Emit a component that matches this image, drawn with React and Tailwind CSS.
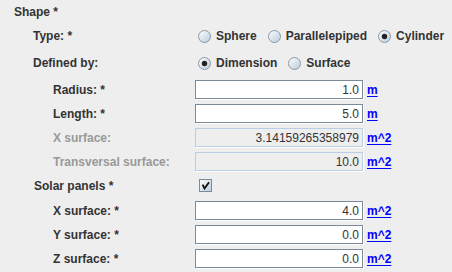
import React from "react";

const font = { fontFamily: '"Liberation Sans", Arial, sans-serif' };

function Radio({ checked, label }) {
  return (
    <div className="flex items-center">
      <svg width="13" height="13" viewBox="0 0 13 13" className="shrink-0">
        <defs>
          <linearGradient id="rg" x1="0" y1="0" x2="1" y2="1">
            <stop offset="0" stopColor="#ffffff" />
            <stop offset="1" stopColor="#b8cbdc" />
          </linearGradient>
        </defs>
        <circle cx="6.5" cy="6.5" r="6" fill="url(#rg)" stroke="#8a97a3" strokeWidth="1" />
        {checked && <circle cx="6.5" cy="6.5" r="2.7" fill="#222" />}
      </svg>
      <span className="ml-[5px] text-[12px] font-bold text-[#333333]">{label}</span>
    </div>
  );
}

function Checkbox() {
  return (
    <svg width="13" height="13" viewBox="0 0 13 13" className="shrink-0">
      <defs>
        <linearGradient id="cg" x1="0" y1="0" x2="1" y2="1">
          <stop offset="0" stopColor="#ffffff" />
          <stop offset="1" stopColor="#b8cbdc" />
        </linearGradient>
      </defs>
      <rect x="0.5" y="0.5" width="12" height="12" fill="url(#cg)" stroke="#7a8a99" />
      <path d="M4 6.5 L5.5 9.5 L9.5 4" fill="none" stroke="#111" strokeWidth="1.8" strokeLinecap="square" />
    </svg>
  );
}

function Field({ value, unit, disabled }) {
  return (
    <div className="flex items-center">
      <div
        className={
          disabled
            ? "w-[168px] h-[19px] border border-[#b8cfe5] bg-[#eeeeee] shadow-[1px_1px_0_#ffffff] flex items-center justify-end pr-[3px] text-[12px] text-[#333333]"
            : "w-[168px] h-[19px] border border-[#7a8a99] bg-white shadow-[1px_1px_0_#ffffff] flex items-center justify-end pr-[3px] text-[12px] text-[#333333]"
        }
      >
        {value}
      </div>
      <span className="ml-[4px] text-[12px] font-bold text-[#0000ff] underline underline-offset-2">{unit}</span>
    </div>
  );
}

function Label({ children, indent, disabled }) {
  return (
    <div
      className={
        "w-[195px] shrink-0 text-[12px] font-bold " +
        (disabled ? "text-[#999999]" : "text-[#333333]")
      }
      style={{ paddingLeft: indent }}
    >
      {children}
    </div>
  );
}

function FieldRow({ label, value, unit, disabled }) {
  return (
    <div className="flex items-center h-[24px] pt-[1px]">
      <Label indent={53} disabled={disabled}>{label}</Label>
      <Field value={value} unit={unit} disabled={disabled} />
    </div>
  );
}

export default function App() {
  return (
    <div className="w-[452px] h-[272px] bg-[#eeeeee] overflow-hidden flex flex-col leading-[24px]" style={font}>
      <div className="flex items-center h-[24px]">
        <Label indent={14}>Shape *</Label>
      </div>
      <div className="flex items-center h-[24px]">
        <Label indent={33}>Type: *</Label>
        <div className="flex items-center gap-[11px] pl-[3px]">
          <Radio label="Sphere" />
          <Radio label="Parallelepiped" />
          <Radio label="Cylinder" checked />
        </div>
      </div>
      <div className="flex items-center h-[24px] mt-[3px]">
        <Label indent={33}>Defined by:</Label>
        <div className="flex items-center gap-[11px] pl-[3px]">
          <Radio label="Dimension" checked />
          <Radio label="Surface" />
        </div>
      </div>
      <div className="mt-[2px] flex flex-col">
        <FieldRow label="Radius: *" value="1.0" unit="m" />
        <FieldRow label="Length: *" value="5.0" unit="m" />
        <FieldRow label="X surface:" value="3.14159265358979" unit="m^2" disabled />
        <FieldRow label="Transversal surface:" value="10.0" unit="m^2" disabled />
      </div>
      <div className="flex items-center h-[25px]">
        <Label indent={34}>Solar panels *</Label>
        <div className="pl-[4px] flex items-center">
          <Checkbox />
        </div>
      </div>
      <div className="flex flex-col">
        <FieldRow label="X surface: *" value="4.0" unit="m^2" />
        <FieldRow label="Y surface: *" value="0.0" unit="m^2" />
        <FieldRow label="Z surface: *" value="0.0" unit="m^2" />
      </div>
    </div>
  );
}
